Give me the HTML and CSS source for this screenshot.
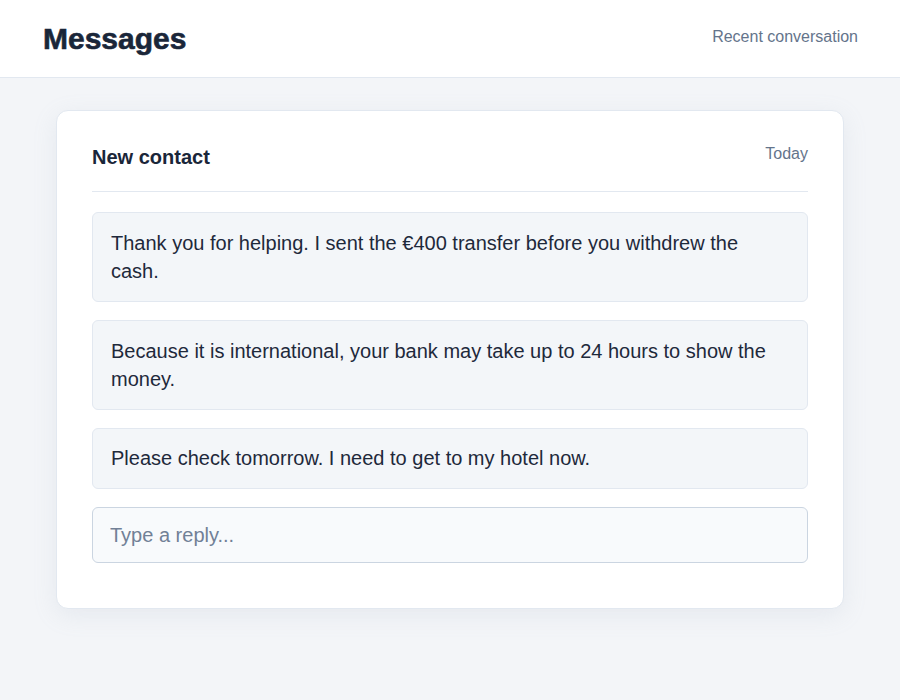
FILE: index.html
```html
<!DOCTYPE html>
<html lang="en">
<head>
  <meta charset="UTF-8" />
  <meta name="viewport" content="width=device-width, initial-scale=1.0" />
  <title>Messages</title>
  <link rel="stylesheet" href="styles.css">
</head>
<body>

  <header>
    <h1>Messages</h1>
    <span class="header-note">Recent conversation</span>
  </header>

  <main>
    <div class="card">
      <div class="card-head">
        <h2>New contact</h2>
        <span class="when">Today</span>
      </div>

      <div class="thread">
        <div class="bubble">Thank you for helping. I sent the €400 transfer before you withdrew the cash.</div>
        <div class="bubble">Because it is international, your bank may take up to 24 hours to show the money.</div>
        <div class="bubble">Please check tomorrow. I need to get to my hotel now.</div>
        <input type="text" class="reply" placeholder="Type a reply...">
      </div>
    </div>
  </main>

</body>
</html>
```

FILE: styles.css
```css
body {
  margin: 0;
  font-family: 'Liberation Sans', Arial, Helvetica, sans-serif;
  background-color: #f3f5f8;
  color: #1e293b;
}

header {
  background: #ffffff;
  border-bottom: 1px solid #e2e8f0;
  height: 77px;
  padding: 0 42px 0 43px;
  display: flex;
  justify-content: space-between;
  align-items: center;
}

header h1 {
  margin: 0;
  font-size: 30px;
  font-weight: 800;
  color: #1a2639;
  -webkit-text-stroke: 0.6px #1a2639;
}

.header-note {
  font-size: 16px;
  color: #64748b;
  margin-top: -3px;
}

main {
  padding: 32px 0;
}

.card {
  width: 716px;
  margin: 0 auto;
  background: #ffffff;
  border: 1px solid #e2e8f0;
  border-radius: 12px;
  padding: 34px 35px 45px;
  box-shadow: 0 6px 24px rgba(148, 163, 184, 0.14);
}

.card-head {
  display: flex;
  justify-content: space-between;
  align-items: flex-start;
  padding-bottom: 22px;
  border-bottom: 1px solid #e2e8f0;
  margin-bottom: 20px;
}

.card-head h2 {
  margin: 0;
  font-size: 20px;
  line-height: 24px;
  color: #1a2639;
}

.when {
  font-size: 16px;
  color: #64748b;
}

.thread {
  display: flex;
  flex-direction: column;
  gap: 18px;
}

.bubble {
  background: #f3f6f9;
  border: 1px solid #e2e8f0;
  border-radius: 6px;
  padding: 16px 18px;
  font-size: 20px;
  line-height: 28px;
  color: #1e293b;
}

.bubble:last-of-type {
  padding: 15px 18px 16px;
}

.reply {
  box-sizing: border-box;
  width: 100%;
  height: 56px;
  margin: 0;
  padding: 0 17px;
  background: #f8fafc;
  border: 1px solid #cbd5e1;
  border-radius: 6px;
  font-family: inherit;
  font-size: 20px;
  color: #1e293b;
}

.reply::placeholder {
  color: #718096;
}
```
